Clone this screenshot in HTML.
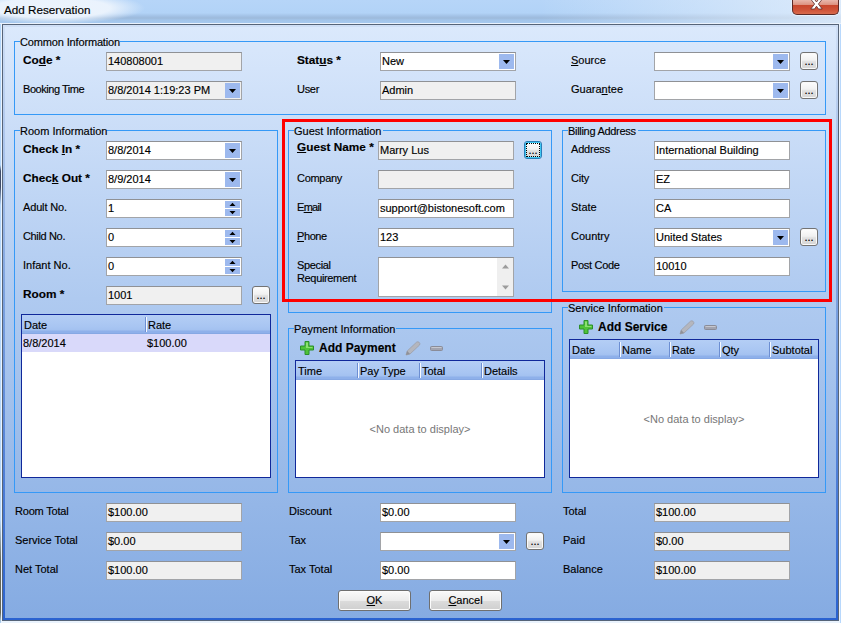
<!DOCTYPE html>
<html lang="en">
<head>
<meta charset="utf-8">
<title>Add Reservation</title>
<style>
html,body{margin:0;padding:0}
body{width:841px;height:623px;overflow:hidden;background:#fff;font-family:"Liberation Sans",sans-serif;font-size:11px;color:#000;-webkit-text-stroke:0.15px #000}
#win{position:relative;width:841px;height:623px;overflow:hidden;background:linear-gradient(to right,#b2d5fa 0,#b2d5fa 1px,#eaf3fd 1px,#eaf3fd 840px,#b8d8fc 840px)}
#win div,#win i,#win span{box-sizing:border-box}
.title{position:absolute;left:0;top:0;width:841px;height:24px;padding:3px 0 0 4px;font-size:11.7px;color:#000;background:linear-gradient(to bottom,#b6d5f8 0,#b2d3f7 13px,#a3c2e6 16px,#9dbadb 18px,#a3c5ea 20px,#a6c9ef 22.9px,#eaf2fd 23px,#eaf2fd 24px)}
.title:before{content:"";position:absolute;left:-40px;top:-8px;width:185px;height:32px;background:radial-gradient(ellipse closest-side,rgba(238,245,253,.97) 0,rgba(238,245,253,.93) 62%,rgba(238,245,253,0) 100%)}
.title:after{content:"";position:absolute;left:540px;top:0;width:301px;height:23px;background:linear-gradient(to right,rgba(235,243,252,0) 0,rgba(235,243,252,.55) 75%,rgba(235,243,252,.7) 100%)}
.title span{position:relative}
.close{position:absolute;left:792px;top:0;width:47px;height:15px;border:1px solid #5c2a26;border-top:0;border-radius:0 0 5px 5px;background:linear-gradient(to bottom,#e9b7ab 0,#dc907e 5px,#c8472d 5.5px,#cf5338 10px,#d86a4c 100%);overflow:hidden;box-shadow:0 0 0 1px rgba(235,243,252,.8)}
.close svg{position:absolute;left:0;top:0}
.client{position:absolute;left:2px;top:24px;width:837px;height:597px;border:1px solid #566478;background:linear-gradient(to bottom,#dbe9fc 0,#afcaf0 46%,#85abe2 100%)}
.client:before{content:"";position:absolute;left:0;top:0;right:0;bottom:0;border:2px solid transparent;border-image:linear-gradient(to bottom,#cfdff6 0,#7da3e0 45%,#2a62d0 100%) 1}
.l{position:absolute;white-space:nowrap;line-height:13px;font-size:11px}
.b{font-weight:bold;font-size:11.8px;margin-top:1px}
.tb{font-size:12px}
.f{position:absolute;background:#fff;border:1px solid #a2a4a8;border-top-color:#8f9195;overflow:hidden}
.f.g{background:#f0f0f0}
.f span{position:absolute;left:1px;top:1px;line-height:14px;white-space:nowrap}
.dd{position:absolute;right:1px;top:1px;width:15px;height:15px;background:#9db9ee}
.dd svg{position:absolute;left:0;top:0}
.su,.sd{position:absolute;right:1px;width:15px;height:7px;background:#9db9ee}
.su{top:1px}.sd{top:9px}
.su svg,.sd svg{position:absolute;left:0;top:0}
.sb{position:absolute;right:0;top:0;width:16px;height:38px;background:#efefef}
.eb{position:absolute;width:18px;height:18px;border:1px solid #737373;border-radius:3px;background:linear-gradient(to bottom,#fdfdfd 0,#f1f1f1 45%,#e1e1e1 55%,#d6d6d6 100%);box-shadow:inset 0 0 0 1px #f9f9f9}
.eb span{position:absolute;left:0;width:16px;text-align:center;top:2px;line-height:12px;font-size:11px;font-weight:normal;letter-spacing:0;color:#000;-webkit-text-stroke:0.2px #000}
.eb.foc{border-color:#2a7db8;box-shadow:inset 0 0 0 1px #3fc8f2}
.eb.foc:after{content:"";position:absolute;left:1px;top:1px;right:1px;bottom:1px;border:1px dotted #000}
.gb{position:absolute;border:1px solid #3599f7;border-top:0}
.gt{position:absolute;height:1px;background:#3599f7}
.gr{position:absolute;border:1px solid #10289a;background:#fff;overflow:hidden}
.gh{position:absolute;left:0;top:0;right:0;height:19px;background:linear-gradient(to bottom,#b4cef5 0,#a8c5f2 12px,#a3c1f0 15px,#8eb0ea 16px,#8eb0ea 100%);border-bottom:1px solid #86a8e4}
.gc{position:absolute;top:0;height:18px}
.gc:after{content:"";position:absolute;right:0;top:2px;bottom:1px;width:1px;background:#6c8ed2}
.gc:before{content:"";position:absolute;left:0;top:2px;bottom:1px;width:1px;background:#f4f8ff}
.gc:first-child:before,.gc:last-child:after{display:none}
.gc span{position:absolute;left:2px;top:4px;line-height:13px;white-space:nowrap}
.row{position:absolute;left:0;right:0;height:18px;background:#d9d9fa}
.row span{position:absolute;top:2px;line-height:14px;white-space:nowrap}
.nd{position:absolute;left:0;right:0;top:50%;margin-top:3px;text-align:center;color:#777;line-height:14px;-webkit-text-stroke:0}
.red{position:absolute;left:282px;top:119px;width:550px;height:183px;border:3px solid #fe0000}
.plus,.pen,.minus{position:absolute}
.btn{position:absolute;width:73px;height:21px;border:1px solid #6f6f6f;border-radius:3px;background:linear-gradient(to bottom,#fafafa 0,#ececec 50%,#dcdcdc 51%,#cfcfcf 100%);box-shadow:inset 0 0 0 1px #fcfcfc}
.btn span{position:absolute;left:0;right:0;top:3px;text-align:center;line-height:13px}
.edge{position:absolute;left:0;width:1px;background:linear-gradient(to bottom,rgba(50,62,92,0) 0,rgba(50,62,92,.9) 15%,rgba(50,62,92,.9) 55%,rgba(50,62,92,0) 100%)}
.e2{background:linear-gradient(to bottom,rgba(90,84,60,0) 0,rgba(90,84,60,.85) 40%,rgba(90,84,60,.85) 90%,rgba(90,84,60,0) 100%)}

</style>
</head>
<body>
<div id="win">
<div class="title"><span>Add Reservation</span></div>
<div class="close"><svg width="46" height="15" viewBox="0 0 46 15"><path d="M18 -0.5h3.6l1.9 2.5 1.9-2.5h3.6l-3.6 4.5 3.8 5h-3.7l-2-2.8-2 2.8h-3.7l3.8-5z" fill="#fff" stroke="#5a2a2a" stroke-width="0.8"/></svg></div>
<div class="client"></div>
<div class="edge" style="top:165px;height:40px"></div>
<div class="edge e2" style="top:520px;height:103px"></div>
<div class="gb" style="left:14px;top:41px;width:812px;height:74px"></div>
<div class="gt" style="left:14px;top:41px;width:6px"></div>
<div class="gt" style="left:120px;top:41px;width:706px"></div>
<div class="l" style="left:20px;top:36px;letter-spacing:-0.15px">Common Information</div>
<div class="l b" style="left:23px;top:53px">Co<u>d</u>e *</div>
<div class="f g" style="left:106px;top:52px;width:136px;height:19px"><span>140808001</span></div>
<div class="l" style="left:23px;top:83px;letter-spacing:-0.45px">Booking Time</div>
<div class="f g" style="left:106px;top:81px;width:136px;height:19px"><span>8/8/2014 1:19:23 PM</span><i class="dd"><svg width="15" height="15" viewBox="0 0 15 15"><path d="M4 6h7l-3.5 4z" fill="#000"/></svg></i></div>
<div class="l b" style="left:297px;top:53px">Stat<u>u</u>s *</div>
<div class="f" style="left:380px;top:52px;width:136px;height:19px"><span>New</span><i class="dd"><svg width="15" height="15" viewBox="0 0 15 15"><path d="M4 6h7l-3.5 4z" fill="#000"/></svg></i></div>
<div class="l" style="left:297px;top:83px;letter-spacing:-0.3px">User</div>
<div class="f g" style="left:380px;top:81px;width:136px;height:19px"><span>Admin</span></div>
<div class="l" style="left:571px;top:54px"><u>S</u>ource</div>
<div class="f" style="left:654px;top:52px;width:136px;height:19px"><i class="dd"><svg width="15" height="15" viewBox="0 0 15 15"><path d="M4 6h7l-3.5 4z" fill="#000"/></svg></i></div>
<div class="eb" style="left:800px;top:52px"><span>...</span></div>
<div class="l" style="left:571px;top:83px">Guara<u>n</u>tee</div>
<div class="f" style="left:654px;top:81px;width:136px;height:19px"><i class="dd"><svg width="15" height="15" viewBox="0 0 15 15"><path d="M4 6h7l-3.5 4z" fill="#000"/></svg></i></div>
<div class="eb" style="left:800px;top:81px"><span>...</span></div>
<div class="gb" style="left:14px;top:130px;width:264px;height:363px"></div>
<div class="gt" style="left:14px;top:130px;width:6px"></div>
<div class="gt" style="left:106px;top:130px;width:172px"></div>
<div class="l" style="left:20px;top:125px">Room Information</div>
<div class="l b" style="left:23px;top:142px">Check <u>I</u>n *</div>
<div class="f" style="left:106px;top:141px;width:136px;height:19px"><span>8/8/2014</span><i class="dd"><svg width="15" height="15" viewBox="0 0 15 15"><path d="M4 6h7l-3.5 4z" fill="#000"/></svg></i></div>
<div class="l b" style="left:23px;top:171px">Chec<u>k</u> Out *</div>
<div class="f" style="left:106px;top:170px;width:136px;height:19px"><span>8/9/2014</span><i class="dd"><svg width="15" height="15" viewBox="0 0 15 15"><path d="M4 6h7l-3.5 4z" fill="#000"/></svg></i></div>
<div class="l" style="left:23px;top:201px;letter-spacing:-0.15px">Adult No.</div>
<div class="f" style="left:106px;top:199px;width:136px;height:19px"><span>1</span><i class="su"><svg width="15" height="7" viewBox="0 0 15 7"><path d="M4.5 5h6l-3-3.2z" fill="#000"/></svg></i><i class="sd"><svg width="15" height="7" viewBox="0 0 15 7"><path d="M4.5 2h6l-3 3.2z" fill="#000"/></svg></i></div>
<div class="l" style="left:23px;top:230px;letter-spacing:-0.35px">Child No.</div>
<div class="f" style="left:106px;top:228px;width:136px;height:19px"><span>0</span><i class="su"><svg width="15" height="7" viewBox="0 0 15 7"><path d="M4.5 5h6l-3-3.2z" fill="#000"/></svg></i><i class="sd"><svg width="15" height="7" viewBox="0 0 15 7"><path d="M4.5 2h6l-3 3.2z" fill="#000"/></svg></i></div>
<div class="l" style="left:23px;top:259px">Infant No.</div>
<div class="f" style="left:106px;top:257px;width:136px;height:19px"><span>0</span><i class="su"><svg width="15" height="7" viewBox="0 0 15 7"><path d="M4.5 5h6l-3-3.2z" fill="#000"/></svg></i><i class="sd"><svg width="15" height="7" viewBox="0 0 15 7"><path d="M4.5 2h6l-3 3.2z" fill="#000"/></svg></i></div>
<div class="l b" style="left:23px;top:287px">Room *</div>
<div class="f g" style="left:106px;top:286px;width:136px;height:19px"><span>1001</span></div>
<div class="eb" style="left:252px;top:286px"><span>...</span></div>
<div class="gr" style="left:21px;top:314px;width:250px;height:164px">
<div class="gh">
<div class="gc" style="left:0px;width:124px"><span>Date</span></div>
<div class="gc" style="left:124px;width:124px"><span>Rate</span></div>
</div>
<div class="row" style="top:19px">
<span style="left:1px">8/8/2014</span>
<span style="left:125px">$100.00</span>
</div>
</div>
<div class="gb" style="left:288px;top:130px;width:264px;height:183px"></div>
<div class="gt" style="left:288px;top:130px;width:6px"></div>
<div class="gt" style="left:383px;top:130px;width:169px"></div>
<div class="l" style="left:294px;top:125px">Guest Information</div>
<div class="l b" style="left:297px;top:140px"><u>G</u>uest Name *</div>
<div class="f g" style="left:378px;top:141px;width:136px;height:19px"><span>Marry Lus</span></div>
<div class="eb foc" style="left:524px;top:141px"><span>...</span></div>
<div class="l" style="left:297px;top:172px;letter-spacing:-0.3px">Company</div>
<div class="f g" style="left:378px;top:170px;width:136px;height:19px"></div>
<div class="l" style="left:297px;top:201px;letter-spacing:-0.7px">E<u>m</u>ail</div>
<div class="f" style="left:378px;top:199px;width:136px;height:19px"><span>support@bistonesoft.com</span></div>
<div class="l" style="left:297px;top:230px;letter-spacing:-0.4px"><u>P</u>hone</div>
<div class="f" style="left:378px;top:228px;width:136px;height:19px"><span>123</span></div>
<div class="l" style="left:297px;top:259px;letter-spacing:-0.35px">Special<br>Requirement</div>
<div class="f" style="left:378px;top:257px;width:136px;height:40px"><i class="sb"><svg width="16" height="38" viewBox="0 0 16 38"><path d="M5 10.5h7l-3.5-4z" fill="#9c9c9c"/><path d="M5 27.5h7l-3.5 4z" fill="#9c9c9c"/></svg></i></div>
<div class="gb" style="left:562px;top:130px;width:264px;height:162px"></div>
<div class="gt" style="left:562px;top:130px;width:6px"></div>
<div class="gt" style="left:638px;top:130px;width:188px"></div>
<div class="l" style="left:568px;top:125px;letter-spacing:-0.3px">Billing Address</div>
<div class="l" style="left:571px;top:143px;letter-spacing:-0.2px">Address</div>
<div class="f" style="left:654px;top:141px;width:136px;height:19px"><span>International Building</span></div>
<div class="l" style="left:571px;top:172px;letter-spacing:-0.2px">City</div>
<div class="f" style="left:654px;top:170px;width:136px;height:19px"><span>EZ</span></div>
<div class="l" style="left:571px;top:201px">State</div>
<div class="f" style="left:654px;top:199px;width:136px;height:19px"><span>CA</span></div>
<div class="l" style="left:571px;top:230px">Country</div>
<div class="f" style="left:654px;top:228px;width:136px;height:19px"><span>United States</span><i class="dd"><svg width="15" height="15" viewBox="0 0 15 15"><path d="M4 6h7l-3.5 4z" fill="#000"/></svg></i></div>
<div class="eb" style="left:800px;top:228px"><span>...</span></div>
<div class="l" style="left:571px;top:259px;letter-spacing:-0.3px">Post Code</div>
<div class="f" style="left:654px;top:257px;width:136px;height:19px"><span>10010</span></div>
<div class="red"></div>
<div class="gb" style="left:288px;top:328px;width:264px;height:165px"></div>
<div class="gt" style="left:288px;top:328px;width:6px"></div>
<div class="gt" style="left:396px;top:328px;width:156px"></div>
<div class="l" style="left:294px;top:323px">Payment Information</div>
<svg class="plus" style="left:300px;top:341px" width="14" height="14" viewBox="0 0 14 14"><path d="M5 .5h4v4.5h4.5v4H9v4.5H5V9H.5V5H5z" fill="#4fc238" stroke="#2b8f2b" stroke-width="1"/><path d="M6 1.5h2v4.5h4.5v1H6z" fill="#9be77f" opacity=".8"/></svg>
<div class="l b tb" style="left:319px;top:341px">Add Payment</div>
<svg class="pen" style="left:405px;top:341px" width="17" height="15" viewBox="0 0 17 15"><path d="M1 14l1.2-4L11.5 1.2Q13 .2 14.2 1.4T14.6 4L5 13z" fill="#b4b6be" stroke="#9c9ea8" stroke-width=".8"/><path d="M1 14l1.2-4L5 13z" fill="#8e9098"/></svg>
<svg class="minus" style="left:430px;top:346px" width="13" height="5" viewBox="0 0 13 5"><rect x=".5" y=".5" width="12" height="4" rx="1" fill="#a2a4b0" stroke="#8a8c98"/><rect x="1.5" y="1" width="10" height="1" fill="#c6c8d0"/></svg>
<div class="gr" style="left:295px;top:360px;width:250px;height:118px">
<div class="gh">
<div class="gc" style="left:0px;width:62px"><span>Time</span></div>
<div class="gc" style="left:62px;width:62px"><span>Pay Type</span></div>
<div class="gc" style="left:124px;width:62px"><span>Total</span></div>
<div class="gc" style="left:186px;width:62px"><span>Details</span></div>
</div>
<div class="nd">&lt;No data to display&gt;</div>
</div>
<div class="gb" style="left:562px;top:307px;width:264px;height:186px"></div>
<div class="gt" style="left:562px;top:307px;width:6px"></div>
<div class="gt" style="left:664px;top:307px;width:162px"></div>
<div class="l" style="left:568px;top:302px">Service Information</div>
<svg class="plus" style="left:579px;top:320px" width="14" height="14" viewBox="0 0 14 14"><path d="M5 .5h4v4.5h4.5v4H9v4.5H5V9H.5V5H5z" fill="#4fc238" stroke="#2b8f2b" stroke-width="1"/><path d="M6 1.5h2v4.5h4.5v1H6z" fill="#9be77f" opacity=".8"/></svg>
<div class="l b tb" style="left:598px;top:320px">Add Service</div>
<svg class="pen" style="left:679px;top:320px" width="17" height="15" viewBox="0 0 17 15"><path d="M1 14l1.2-4L11.5 1.2Q13 .2 14.2 1.4T14.6 4L5 13z" fill="#b4b6be" stroke="#9c9ea8" stroke-width=".8"/><path d="M1 14l1.2-4L5 13z" fill="#8e9098"/></svg>
<svg class="minus" style="left:704px;top:325px" width="13" height="5" viewBox="0 0 13 5"><rect x=".5" y=".5" width="12" height="4" rx="1" fill="#a2a4b0" stroke="#8a8c98"/><rect x="1.5" y="1" width="10" height="1" fill="#c6c8d0"/></svg>
<div class="gr" style="left:569px;top:339px;width:250px;height:139px">
<div class="gh">
<div class="gc" style="left:0px;width:50px"><span>Date</span></div>
<div class="gc" style="left:50px;width:50px"><span>Name</span></div>
<div class="gc" style="left:100px;width:50px"><span>Rate</span></div>
<div class="gc" style="left:150px;width:50px"><span>Qty</span></div>
<div class="gc" style="left:200px;width:48px"><span>Subtotal</span></div>
</div>
<div class="nd">&lt;No data to display&gt;</div>
</div>
<div class="l" style="left:15px;top:505px;letter-spacing:-0.2px">Room Total</div>
<div class="f g" style="left:106px;top:503px;width:136px;height:19px"><span>$100.00</span></div>
<div class="l" style="left:15px;top:534px">Service Total</div>
<div class="f g" style="left:106px;top:532px;width:136px;height:19px"><span>$0.00</span></div>
<div class="l" style="left:15px;top:563px">Net Total</div>
<div class="f g" style="left:106px;top:561px;width:136px;height:19px"><span>$100.00</span></div>
<div class="l" style="left:289px;top:505px">Discount</div>
<div class="f" style="left:380px;top:503px;width:136px;height:19px"><span>$0.00</span></div>
<div class="l" style="left:289px;top:534px">Tax</div>
<div class="f" style="left:380px;top:532px;width:136px;height:19px"><i class="dd"><svg width="15" height="15" viewBox="0 0 15 15"><path d="M4 6h7l-3.5 4z" fill="#000"/></svg></i></div>
<div class="eb" style="left:526px;top:532px"><span>...</span></div>
<div class="l" style="left:289px;top:563px">Tax Total</div>
<div class="f" style="left:380px;top:561px;width:136px;height:19px"><span>$0.00</span></div>
<div class="l" style="left:563px;top:505px">Total</div>
<div class="f g" style="left:654px;top:503px;width:136px;height:19px"><span>$100.00</span></div>
<div class="l" style="left:563px;top:534px">Paid</div>
<div class="f g" style="left:654px;top:532px;width:136px;height:19px"><span>$0.00</span></div>
<div class="l" style="left:563px;top:563px">Balance</div>
<div class="f g" style="left:654px;top:561px;width:136px;height:19px"><span>$100.00</span></div>
<div class="btn" style="left:338px;top:590px"><span><u>O</u>K</span></div>
<div class="btn" style="left:429px;top:590px"><span><u>C</u>ancel</span></div>
</div>
</body>
</html>
